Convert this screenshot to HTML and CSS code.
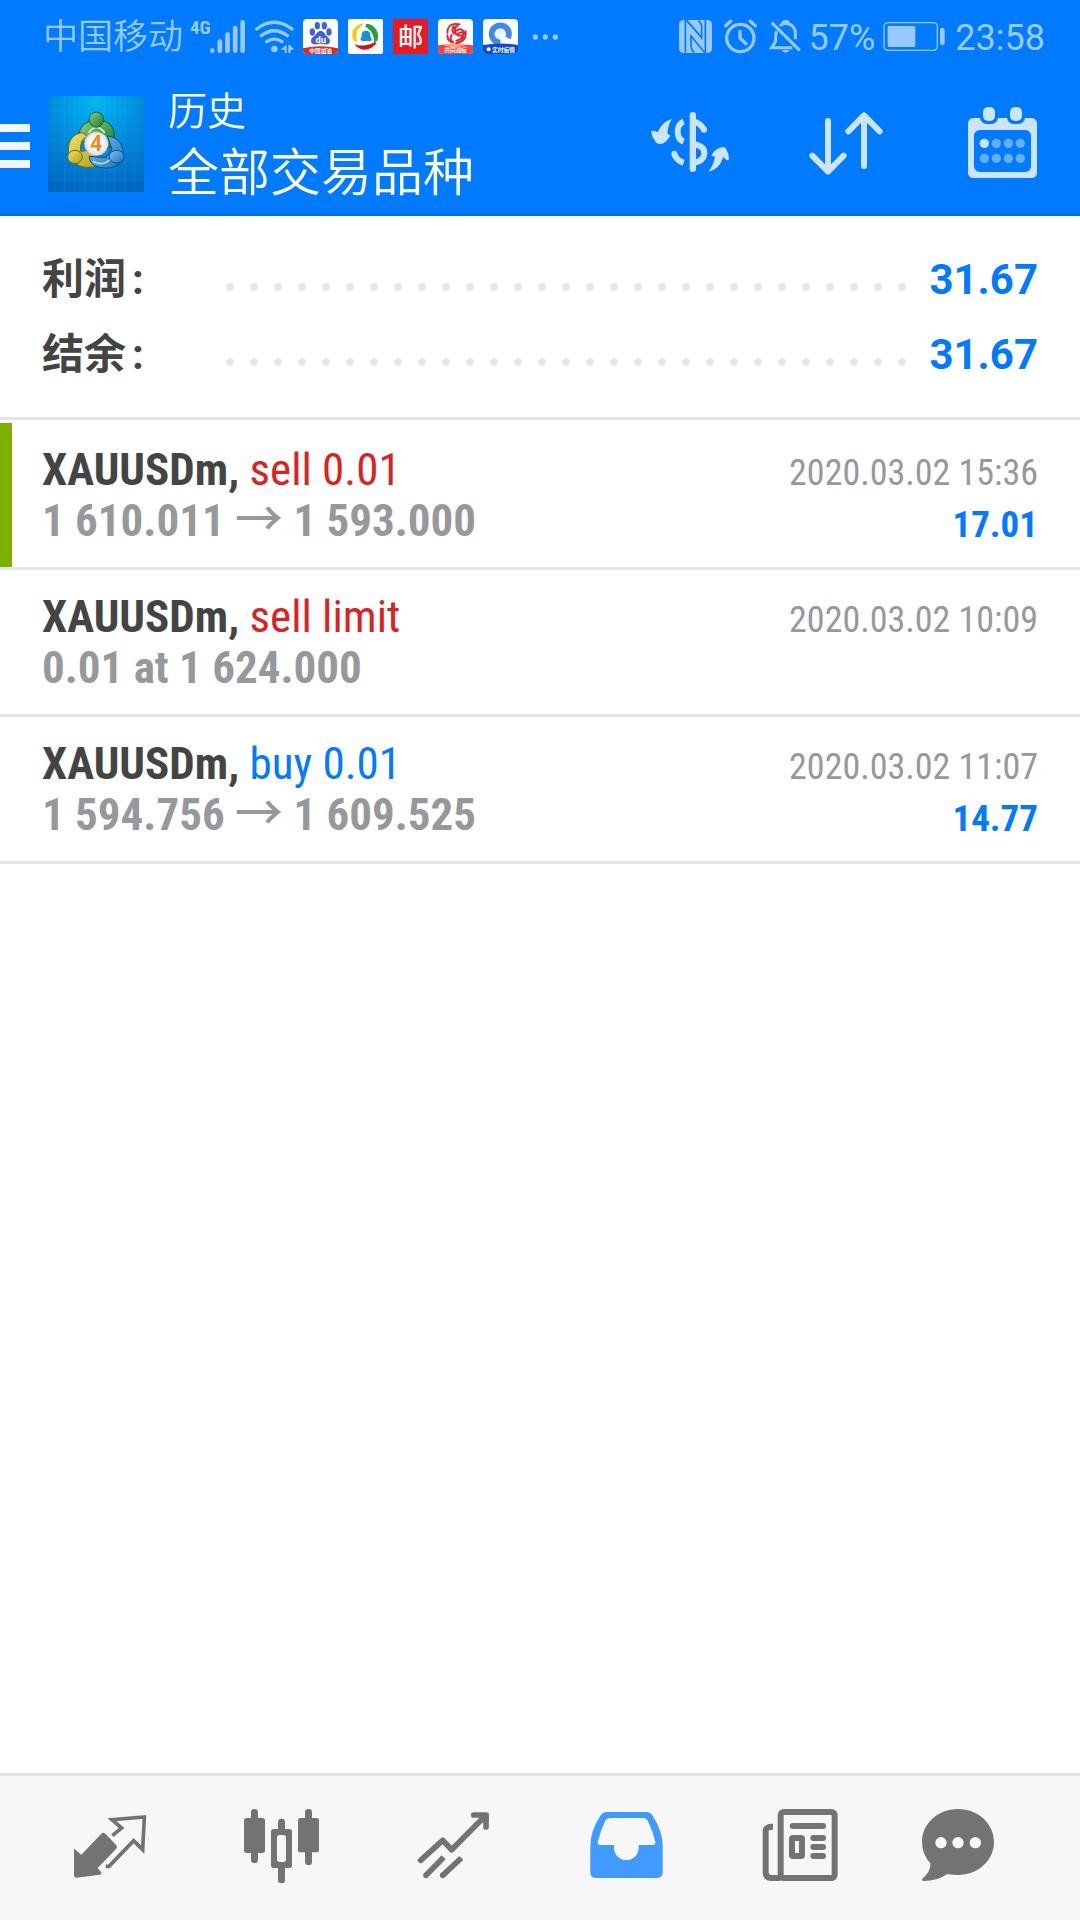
FILE: index.html
```html
<!DOCTYPE html>
<html lang="zh-CN">
<head>
<meta charset="utf-8">
<meta name="viewport" content="width=device-width, initial-scale=1">
<title>历史</title>
<link rel="stylesheet" href="styles.css">
</head>
<body>
<div class="top">
  <div class="status">
    <div class="status-side">
      <span class="carrier">中国移动</span>
      <span class="network">
        <span class="generation">4G</span>
        <svg width="36" height="35" viewBox="630 54 108 105" fill="none" stroke="#99caff" stroke-width="14" stroke-linecap="round">
          <path d="M637 149v0M659.500 122v27M682.500 101v48M705.500 81v68M728 64v85"/>
        </svg>
      </span>
      <svg width="43" height="35" viewBox="759 54 129 105" fill="none" stroke="#99caff" stroke-width="10" stroke-linecap="round">
        <path d="M770 84Q823 44 876 84M784 104Q823 74 862 104M800 122Q823 107 846 122"/>
        <circle cx="823" cy="144" r="10" fill="#99caff" stroke="none"/>
        <path d="M860 131v25h-6v-10h-13zM865 156v-24h5l12 13-11 3v8z" fill="#99caff" stroke="none"/>
      </svg>
      <span class="apps">
        <svg width="35" height="35" viewBox="0 0 105 105">
          <defs><clipPath id="tile"><rect width="105" height="105" rx="12"/></clipPath></defs>
          <g clip-path="url(#tile)">
            <rect width="105" height="105" fill="#fff"/>
            <g fill="#3c62d9"><ellipse cx="28" cy="39" rx="8" ry="11"/><ellipse cx="43" cy="20" rx="8" ry="11"/><ellipse cx="64" cy="20" rx="8" ry="11"/><ellipse cx="78" cy="39" rx="8" ry="11"/>
            <path d="M53 36c9 0 12 8 17 14s11 9 11 16-6 11-14 10-10-2-14-2-8 1-16 2-14-4-13-12 7-10 12-15 8-13 17-13z"/></g>
            <text x="53" y="71" class="du">du</text>
            <path d="M0 88q52-12 105 0v17H0z" fill="#e02a1d"/>
            <text x="53" y="102" class="tag">中国加油</text>
          </g>
        </svg>
        <svg width="35" height="35" viewBox="0 0 105 105">
          <rect width="105" height="105" rx="6" fill="#fff"/>
          <path d="M51 13C20 15 5 38 18 65l10 4C20 42 30 24 51 13z" fill="#fcc907"/>
          <path d="M55 14c27 2 42 28 33 52l-10 4c1-22-9-38-26-47z" fill="#26a13a"/>
          <path d="M18 75c20 24 48 23 68-3l-5-3c-19 11-43 14-63 6z" fill="#d40f1c"/>
          <path d="M54 35c11 0 14 8 13 16l5 13-7 2H43l-6-3 4-12c-1-8 2-16 13-16z" fill="#1494d2"/>
        </svg>
        <svg width="35" height="35" viewBox="0 0 105 105">
          <rect width="105" height="105" rx="3" fill="#ea191d"/>
          <text x="53" y="80" class="post">邮</text>
        </svg>
        <svg width="35" height="35" viewBox="0 0 105 105">
          <g clip-path="url(#tile)">
            <rect width="105" height="105" fill="#fff"/>
            <g fill="none" stroke="#e12735" stroke-width="6" stroke-linecap="round"><path d="M53 42q-9-15 9-26-32-7-34 25M48 44q-9-10-1-22M28 49q1 20 19 22-15-9-6-23M52 37q20-16 27 8-9-9-20 0M83 37q3 30-29 36M54 45q9 8 22 3-2 14-21 17"/></g>
            <path d="M0 79q52-7 105 0v26H0z" fill="#f6433d"/><path d="M15 78q36-6 70 0l-35 8z" fill="#ffa968"/>
            <text x="53" y="99" class="tag">共同战疫</text>
          </g>
        </svg>
        <svg width="35" height="35" viewBox="0 0 105 105">
          <g clip-path="url(#tile)">
            <rect width="105" height="105" fill="#fff"/>
            <circle cx="52" cy="45" r="26" fill="#eef1f5" stroke="#3e8ae8" stroke-width="17"/>
            <path d="M52 45l34 18-18 20-16-5z" fill="#fff"/>
            <path d="M0 78q52-9 105 0v27H0z" fill="#0d4cc8"/>
            <circle cx="17" cy="91" r="6" fill="#fff"/>
            <text x="62" y="98" class="tag">实时疫情</text>
          </g>
        </svg>
        <svg width="35" height="35" viewBox="714 54 105 105" fill="#99caff"><circle cx="736" cy="108" r="8"/><circle cx="766" cy="108" r="8"/><circle cx="796" cy="108" r="8"/></svg>
      </span>
    </div>
    <div class="status-side status-right">
      <svg width="37" height="35" viewBox="57 57 111 105">
        <rect x="57" y="60" width="99" height="99" rx="13" fill="#99caff"/>
        <path d="M76 60v98M136 60v98" stroke="#007aff" stroke-width="5"/>
        <path d="M78 59l47 54V82q0-13-10-20M135 159l-42-51v28q0 14 10 22" fill="none" stroke="#007aff" stroke-width="5"/>
      </svg>
      <svg width="37" height="35" viewBox="192 57 111 105" fill="none" stroke="#99caff" stroke-width="10" stroke-linecap="round">
        <circle cx="241" cy="114" r="41"/><path d="M240 94v21l18 16M197 77l15-13M271 64l15 13"/>
      </svg>
      <svg width="32" height="35" viewBox="327 57 96 105" fill="none" stroke="#99caff" stroke-width="9">
        <path d="M335 68l84 83"/><path d="M360 78q7-8 17-8 32 4 29 36v12M350 93q-4 8-3 31l-12 19h62M370 72v-6q7-5 14 0v6"/><path d="M365 150h24q-12 17-24 0z" fill="#99caff" stroke="none"/>
      </svg>
      <span class="clock">57%</span>
      <svg width="64" height="35" viewBox="669 57 192 105">
        <rect x="672" y="68" width="160" height="83" rx="12" fill="none" stroke="#99caff" stroke-width="4"/>
        <rect x="683" y="78" width="83" height="63" rx="3" fill="#99caff"/><rect x="840" y="83" width="14" height="53" rx="7" fill="#99caff"/>
      </svg>
      <span class="clock">23:58</span>
    </div>
  </div>
  <header class="header">
    <button class="menu" aria-label="菜单"><span></span><span></span><span></span></button>
    <svg class="logo" viewBox="0 0 288 288">
      <defs>
        <radialGradient id="sky" cx=".5" cy=".05" r="1"><stop offset="0" stop-color="#00b7ef"/><stop offset=".5" stop-color="#0089dc"/><stop offset="1" stop-color="#0065be"/></radialGradient>
        <linearGradient id="green" x2="1" y2="1"><stop offset="0" stop-color="#8fcf7d"/><stop offset="1" stop-color="#187c2e"/></linearGradient>
        <linearGradient id="gold" x2="1" y2="1"><stop offset="0" stop-color="#eee36b"/><stop offset="1" stop-color="#b39f13"/></linearGradient>
        <linearGradient id="blue" x2="1" y2="1"><stop offset="0" stop-color="#7cc4ee"/><stop offset="1" stop-color="#1673bb"/></linearGradient>
        <radialGradient id="disc"><stop offset=".5" stop-color="#fff"/><stop offset="1" stop-color="#d7dadd"/></radialGradient>
      </defs>
      <rect width="288" height="288" fill="url(#sky)"/>
      <path d="M20 0v288M50 0v288M80 0v288M110 0v288M140 0v288M170 0v288M200 0v288M230 0v288M260 0v288M0 20h288M0 47h288M0 76h288M0 105h288M0 134h288M0 163h288M0 192h288M0 221h288M0 250h288" stroke="#5bc4f2" stroke-opacity=".18" stroke-width="2"/>
      <path d="M93 118C94 60 198 52 199 118q-4 38-26 42l-16-45-27 1-20 22q-17-5-17-20z" fill="url(#green)" stroke="#0e5b2b" stroke-width="3"/>
      <path d="M122 110q23-32 48 0" fill="none" stroke="#e5f4d0" stroke-width="5"/>
      <path d="M105 110C69 111 55 147 64 178q20 45 78 35l16-17-28-34-32 4q-4-38 20-43z" fill="url(#gold)" stroke="#6e6816" stroke-width="3"/>
      <path d="M178 119q54 8 48 70-22 36-74 25-28-8-28-33l50 4 18-26z" fill="url(#blue)" stroke="#064f91" stroke-width="3"/>
      <path d="M134 196q28 16 50-4l19-28" fill="none" stroke="#b5e0f6" stroke-width="5"/>
      <ellipse cx="145" cy="71" rx="21" ry="23" fill="url(#green)" stroke="#0e5b2b" stroke-width="3"/>
      <ellipse cx="81" cy="183" rx="22" ry="20" fill="url(#gold)" stroke="#6e6816" stroke-width="3"/>
      <ellipse cx="206" cy="182" rx="23" ry="19" fill="url(#blue)" stroke="#064f91" stroke-width="3"/>
      <circle cx="145" cy="143" r="36" fill="url(#disc)" stroke="#8b9b93" stroke-width="1"/>
      <text x="144" y="166" class="logo-mark">4</text>
    </svg>
    <div class="titles">
      <p class="kicker">历史</p>
      <h1 class="title">全部交易品种</h1>
    </div>
    <div class="actions">
      <button aria-label="货币"><svg viewBox="0 0 288 288" fill="#cce4ff">
        <rect x="149" y="48" width="19" height="180" rx="9"/>
        <path d="M131 77c-24 8-24 51 0 60M103 173q5 20 28 27" fill="none" stroke="#cce4ff" stroke-width="18"/><circle cx="103" cy="173" r="9"/>
        <path d="M160 77q19 2 32 23M160 144q34 6 33 28-2 24-33 29" fill="none" stroke="#cce4ff" stroke-width="18"/><circle cx="192" cy="101" r="9"/>
        <path d="M95 69Q84 88 82 112l9 7q-6 10-14 18-8 7-18 7-8 0-12-5-12-17-14-34l10-1 10 5Q66 76 95 69zM205 227q15-18 20-44l-11-5q5-10 13-16 11-9 24-9 4 0 7 5 9 15 9 32-4 5-8 1l-9-8q-12 38-45 44z"/>
      </svg></button>
      <button aria-label="排序"><svg viewBox="411 288 288 288" fill="none" stroke="#cce4ff" stroke-width="18" stroke-linecap="round" stroke-linejoin="round">
        <path d="M504 363v150M457 467l47 48 47-48M612 498V348M565 394l47-48 47 48"/>
      </svg></button>
      <button aria-label="日期"><svg viewBox="882 288 288 288">
        <rect x="924" y="354" width="207" height="180" rx="16" fill="#cce4ff"/>
        <rect x="942" y="390" width="171" height="126" rx="17" fill="#007aff"/>
        <rect x="960" y="318" width="54" height="54" rx="20" fill="#007aff"/><rect x="1041" y="318" width="54" height="54" rx="20" fill="#007aff"/>
        <rect x="969" y="321" width="36" height="42" rx="15" fill="#cce4ff"/><rect x="1050" y="321" width="36" height="42" rx="15" fill="#cce4ff"/>
        <g fill="#66afff"><circle cx="973" cy="430" r="14" fill="#cce4ff"/><circle cx="1009" cy="430" r="14"/><circle cx="1045" cy="430" r="14"/><circle cx="1081" cy="430" r="14"/><circle cx="973" cy="475" r="14"/><circle cx="1009" cy="475" r="14"/><circle cx="1045" cy="475" r="14"/><circle cx="1081" cy="475" r="14"/></g>
      </svg></button>
    </div>
  </header>
</div>

<main class="content">
  <dl class="summary">
    <div class="summary-row"><dt><span>利润</span><span>:</span></dt><dd>31.67</dd></div>
    <div class="summary-row"><dt><span>结余</span><span>:</span></dt><dd>31.67</dd></div>
  </dl>
  <ul class="deals">
    <li class="deal deal-open">
      <div class="deal-main"><p class="symbol">XAUUSDm, <span class="sell">sell 0.01</span></p><p class="price">1 610.011 <span class="arrow">→</span> 1 593.000</p></div>
      <div class="deal-side"><time>2020.03.02 15:36</time><p class="profit">17.01</p></div>
    </li>
    <li class="deal">
      <div class="deal-main"><p class="symbol">XAUUSDm, <span class="sell">sell limit</span></p><p class="price">0.01 at 1 624.000</p></div>
      <div class="deal-side"><time>2020.03.02 10:09</time></div>
    </li>
    <li class="deal">
      <div class="deal-main"><p class="symbol">XAUUSDm, <span class="buy">buy 0.01</span></p><p class="price">1 594.756 <span class="arrow">→</span> 1 609.525</p></div>
      <div class="deal-side"><time>2020.03.02 11:07</time><p class="profit">14.77</p></div>
    </li>
  </ul>
</main>

<nav class="tabs">
  <a href="#quotes" aria-label="行情"><svg viewBox="186 120 288 288">
    <path d="M222 266l22 18 60-63q6-5 12 0l33 35q4 5 0 10l-56 58 12 15q-1 4-6 5l-69 9q-8 0-8-8z" fill="#737373"/>
    <path d="M337 227l28-23-29-25 97-8-5 98-27-27-74 77h-10" fill="none" stroke="#737373" stroke-width="11"/>
  </svg></a>
  <a href="#charts" aria-label="图表"><svg viewBox="702 120 288 288" fill="#737373">
    <rect x="753" y="147" width="21" height="162" rx="10"/><rect x="732" y="174" width="63" height="105" rx="8"/>
    <rect x="915" y="147" width="21" height="168" rx="10"/><rect x="894" y="174" width="63" height="103" rx="8"/>
    <rect x="834" y="176" width="21" height="194" rx="10"/><rect x="813" y="207" width="63" height="117" rx="8"/><rect x="831" y="225" width="27" height="81" rx="8" fill="#f7f7f7"/>
  </svg></a>
  <a href="#trade" aria-label="交易"><svg viewBox="138 120 288 288" fill="none" stroke="#737373" stroke-width="17" stroke-linecap="round" stroke-linejoin="round">
    <path d="M182 301l66-60 27 28L376 167M341 165h37v36"/>
    <path d="M370 160h16v28z" fill="#737373" stroke="none"/>
    <circle cx="198" cy="346" r="8.500" fill="#737373" stroke="none"/><circle cx="248" cy="346" r="8.500" fill="#737373" stroke="none"/>
    <path d="M198 346l53-54M248 346l56-52" stroke-linecap="butt"/>
  </svg></a>
  <a href="#history" aria-label="历史" aria-current="page"><svg viewBox="654 120 288 288">
    <path d="M739 156h122q10 0 15 8 32 48 32 93v80q0 17-17 17H708q-17 0-17-17v-80q0-45 32-93 6-8 16-8z" fill="#419aff"/>
    <path d="M752 174h95q12 0 17 10 15 30 22 62 1 9-9 9h-41v8a37 37 0 0 1-74 0v-8h-40q-10 0-9-9 8-32 22-62 5-10 17-10z" fill="#f7f7f7"/>
  </svg></a>
  <a href="#news" aria-label="新闻"><svg viewBox="90 120 288 288" fill="none" stroke="#737373" stroke-width="18">
    <rect x="182" y="156" width="162" height="198" rx="10"/><path d="M159 200q-22-1-22 14v122q0 18 18 18h27"/>
    <path d="M218 198h91M280 234h29M280 261h29M280 288h29" stroke-linecap="round"/><rect x="216" y="234" width="30" height="54" rx="3"/>
  </svg></a>
  <a href="#chat" aria-label="聊天"><svg viewBox="606 120 288 288">
    <path d="M714 147c60 0 108 44 108 99s-48 99-108 99q-17 0-32-3-30 21-70 21-8-1-5-7 26-21 24-46-25-27-25-64c0-55 48-99 108-99z" fill="#737373"/>
    <g fill="#f7f7f7"><circle cx="663" cy="248" r="17"/><circle cx="714" cy="248" r="17"/><circle cx="766" cy="248" r="17"/></g>
  </svg></a>
</nav>
</body>
</html>
```

FILE: styles.css
```css
* { box-sizing: border-box; margin: 0; padding: 0; }

body {
  min-height: 100vh;
  display: flex;
  flex-direction: column;
  background: #fff;
  color: #444;
  font-family: Roboto, "Noto Sans CJK SC", sans-serif;
}

svg { display: block; flex: none; }

button { border: 0; background: none; cursor: pointer; }

/* Status bar and header */
.top {
  background: #007aff;
  border-bottom: 3px solid #006ee6;
  color: #fff;
}

.status {
  height: 72px;
  padding: 0 35px 0 43px;
  display: flex;
  justify-content: space-between;
  align-items: center;
  color: #99caff;
}

.status-side { display: flex; align-items: center; gap: 7px; }
.status-right { gap: 8px; }

.carrier, .clock { padding-top: 4px; line-height: 48px; white-space: nowrap; }
.carrier { font-size: 35px; font-weight: 350; }
.clock { font-size: 36px; }

.network { display: flex; align-items: flex-start; }

.generation {
  width: 20px;
  font-family: "Roboto Condensed", "Liberation Sans Narrow", sans-serif;
  font-size: 19px;
  font-weight: 700;
  line-height: 18px;
}

.apps { display: flex; gap: 10px; }

.tag, .du, .post, .logo-mark { fill: #fff; text-anchor: middle; font-weight: 700; }
.tag { font-size: 17px; }
.du { font-size: 28px; }
.post { font-size: 76px; font-weight: 500; }
.logo-mark { fill: #f08a24; font-size: 64px; }

.header {
  height: 141px;
  padding: 3px 30px 0 0;
  display: flex;
  align-items: center;
}

.menu {
  width: 30px;
  padding-top: 4px;
  display: flex;
  flex-direction: column;
  gap: 10px;
}

.menu span { height: 8px; background: #f0f7ff; }

.logo { width: 96px; height: 96px; margin-left: 18px; }

.titles { flex: 1; margin-left: 24px; }
.kicker { font-size: 39px; font-weight: 350; line-height: 60px; }
.title { font-size: 51px; font-weight: 350; line-height: 64px; }

.actions { display: flex; gap: 61px; }
.actions svg { width: 96px; height: 96px; }

/* Totals */
.content { flex: 1; }

.summary {
  padding: 26px 42px 25px;
  border-bottom: 3px solid #e5e5e5;
  font-size: 42px;
  font-weight: 700;
  line-height: 75px;
}

.summary-row { display: flex; }

.summary dt { width: 176px; display: flex; gap: 6px; }

.summary dd {
  flex: 1;
  display: flex;
  justify-content: flex-end;
  color: #007aff;
}

.summary dd::before {
  content: "";
  flex: 1;
  height: 24px;
  margin: 33px 14px 0 0;
  background: radial-gradient(circle, #e5e5e5 3px, transparent 5px) 0 0 / 24px 24px;
}

/* Deals */
.deals { list-style: none; padding-top: 3px; }

.deal {
  min-height: 147px;
  padding: 21px 42px 16px;
  display: flex;
  justify-content: space-between;
  align-items: baseline;
  border-bottom: 3px solid #e5e5e5;
  font-family: "Roboto Condensed", "Liberation Sans Narrow", Roboto, sans-serif;
  line-height: 51px;
}

.deal-open {
  background: linear-gradient(#7eb000, #7eb000) no-repeat 0 0 / 12px 100%;
}

.symbol, .price { font-size: 45px; font-weight: 700; }
.price { color: #97989c; }
.sell, .buy { font-weight: 400; }
.sell { color: #d92323; }
.buy { color: #007aff; }
.arrow { font-family: "Noto Sans CJK SC", sans-serif; font-size: 48px; font-weight: 500; line-height: 0; }

.deal-side { font-size: 36px; text-align: right; }
.deal-side time { display: block; color: #97989c; }
.profit { color: #007aff; font-size: 37px; font-weight: 700; }

/* Bottom tabs */
.tabs {
  padding: 24px;
  display: grid;
  grid-template-columns: repeat(6, 1fr);
  justify-items: center;
  background: #f7f7f7;
  border-top: 3px solid #e3e3e3;
}

.tabs svg { width: 96px; height: 96px; }
```
